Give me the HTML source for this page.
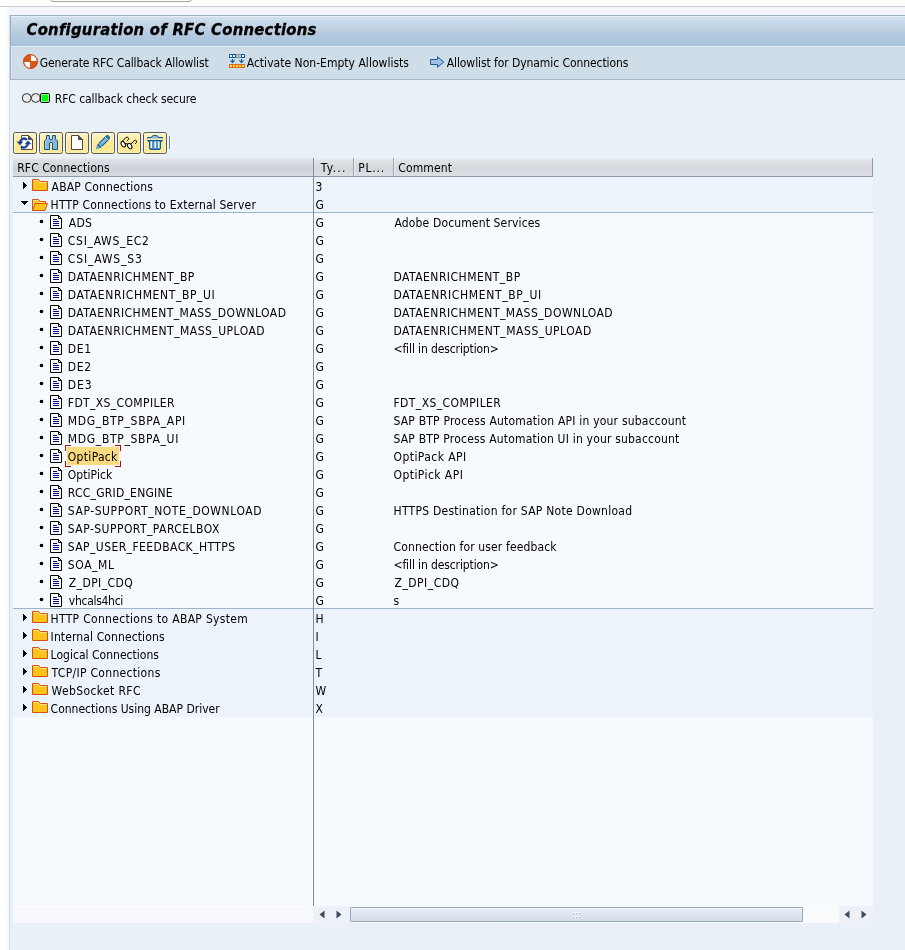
<!DOCTYPE html>
<html><head><meta charset="utf-8"><title>Configuration of RFC Connections</title>
<style>
*,*:before,*:after{box-sizing:border-box}
html,body{margin:0;padding:0}
body{width:905px;height:950px;overflow:hidden;position:relative;background:#fff;font-family:"DejaVu Sans Condensed","Liberation Sans",sans-serif;font-size:12px;color:#000}
.abs,.row,.row>*{position:absolute}
#topbox{position:absolute;left:50px;top:-10px;width:142px;height:12px;border:1px solid #a4a4a4;border-radius:3px;background:#fff}
#l6{position:absolute;left:0;top:6px;width:905px;height:1px;background:#c6cedb}
#band{position:absolute;left:0;top:7px;width:905px;height:943px;background:linear-gradient(90deg,#fff 0,#fff 5px,#f7f9fd 9px,#f2f5fb 10px)}
#panel{position:absolute;left:9px;top:15px;width:896px;height:935px;background:#e9f0f8;border-left:1px solid #d3d9e7}
#title{position:absolute;left:0;top:0;width:896px;height:31px;border-top:1px solid #9eb0c8;border-left:1px solid #9eb0c8;background:linear-gradient(#e8eef8 0,#e8eef8 1px,#d1dfed 1px,#c2d3e4 11px,#b4c9df 19px,#a9c4de 28px,#a8c0d8 29px)}
#title span{position:absolute;left:15.5px;top:4px;-webkit-text-stroke:0.3px #000;font-family:"DejaVu Sans Condensed","DejaVu Sans","Liberation Sans",sans-serif;font-weight:bold;font-style:italic;font-size:16.5px;line-height:20px;white-space:nowrap;letter-spacing:0.25px}
#tb{position:absolute;left:0;top:31px;width:896px;height:34px;border-top:1px solid #e1eefa;border-left:1px solid #9eb0c8;border-bottom:1px solid #a3b4c8;background:linear-gradient(#ccd9e3 0,#cfdde9 4px);box-shadow:inset 1px 0 0 #dde7f0,0 1px 0 #eef3f9}
.tbt{position:absolute;top:48px;height:32px;line-height:31px;white-space:nowrap}
.row{left:13px;width:860px;height:18px;line-height:18px;white-space:nowrap}
.row.f{background:#edf3fb}
.row.c{background:#f6f9fd}
.row .t{top:1px}
.row .ft{left:39px}
.row .ct{left:56px}
.row .ty{left:302.5px;top:1px}
.row .cm{top:1px}
.row .ic{display:block}
.row .fold{left:19px;top:2px}
.row .doc{left:37px;top:2px}
.ar{left:10px;top:5px;width:4px;height:7px}
.ad{left:8px;top:6px;width:7px;height:4px}
.bu{left:27px;top:7px;width:3px;height:3px;background:#000;border-radius:1.5px;box-shadow:0 0 0 0.3px #000}
.selbg{left:54px;top:0;width:52px;height:18px;background:#fbd97f}
.k{width:6px;height:6px;border:0 solid #b90a0a}
.k1{left:52px;top:-2px;border-width:1px 0 0 1px}.k2{left:102px;top:-2px;border-width:1px 1px 0 0}
.k3{left:52px;top:14px;border-width:0 0 1px 1px}.k4{left:102px;top:14px;border-width:0 1px 1px 0}
#hdr{position:absolute;left:13px;top:158px;width:860px;height:19px;background:linear-gradient(#e9ebee 0,#dde0e5 2px,#ced2d9 10px,#d8dbe0 18px);border-bottom:1px solid #8e9aaa;border-right:1px solid #8e9aaa;line-height:18px;white-space:nowrap}
#hdr span{position:absolute;top:1px}
#hdr i{position:absolute;left:301px;top:0;width:558px;height:18px;background:linear-gradient(#eef0f3 0,#e1e4e8 2px,#d4d8de 10px,#dcdfe4 18px)}
#vline{z-index:3;position:absolute;left:313px;top:158px;width:1px;height:748px;background:#838e9b}
.hsep{position:absolute;top:158px;width:1px;height:18px;background:#98a2b0;box-shadow:1px 0 0 #eceef2}
#sepA,#sepB{position:absolute;left:13px;width:860px;height:1px;background:#9eb2c8}
#empty{position:absolute;left:13px;top:717px;width:860px;height:189px;background:#f6f9fd}
.btn{position:absolute;top:132px;width:24px;height:22px;background:#fbe98f}
.btn:before{content:"";position:absolute;left:0;top:0;width:24px;height:22px;border:1px solid #585a60;border-radius:2.5px;background:linear-gradient(#fefadf 0,#fdf3bc 2px,#fbe994 9px,#fae78f 16px,#fcedaa 20px);box-shadow:inset 1px 0 0 #fdf5cc,inset -1px 0 0 #fcf0b8}
.btn svg{position:absolute;left:0;top:0}
#root{position:absolute;left:0;top:0;width:905px;height:950px;overflow:hidden;will-change:transform}
</style></head><body><div id="root">
<div id="topbox"></div><div id="l6"></div><div id="band"></div>
<div id="panel">
 <div id="title"><span>Configuration of RFC Connections</span></div>
 <div id="tb"></div>
</div>

<!-- app toolbar -->
<svg class="abs" style="left:23px;top:54px" width="15" height="15" viewBox="0 0 15 15"><circle cx="7.5" cy="7.5" r="7" fill="#dc5614" stroke="#c63e16" stroke-width="1"/><path d="M8 7V1.3A6.2 6.2 0 0 1 13.7 7Z M7 8V13.7A6.2 6.2 0 0 1 1.3 8Z" fill="#fff"/></svg>
<span class="tbt" style="left:39.8px;letter-spacing:-0.117px">Generate RFC Callback Allowlist</span>
<svg class="abs" style="left:229px;top:54px" width="16" height="14" viewBox="0 0 16 14"><rect x="0" y="0" width="16" height="4" rx="0.6" fill="#0b5f9c"/><rect x="7" y="0" width="5" height="4" fill="#8c8c8c"/><rect x="1" y="1" width="2" height="2" fill="#eef0fa"/><rect x="4" y="1" width="2" height="2" fill="#eef0fa"/><rect x="7.3" y="1" width="1.9" height="2" fill="#d6d2cc"/><rect x="10" y="1" width="1.9" height="2" fill="#d6d2cc"/><rect x="13" y="1" width="2" height="2" fill="#eef0fa"/><path d="M3.5 5V9M12.5 5V9" stroke="#0b5f9c" stroke-width="1.1"/><path d="M1.4 6.3L3.5 8.4L5.6 6.3M10.4 6.3L12.5 8.4L14.6 6.3" fill="none" stroke="#0b5f9c" stroke-width="1.1"/><rect x="0" y="10" width="16" height="4" rx="0.6" fill="#e4641c"/><rect x="1" y="11" width="2" height="2" fill="#ffe644"/><rect x="4" y="11" width="2" height="2" fill="#ffe644"/><rect x="7" y="11" width="2" height="2" fill="#ffe644"/><rect x="10" y="11" width="2" height="2" fill="#ffe644"/><rect x="13" y="11" width="2" height="2" fill="#ffe644"/></svg>
<span class="tbt" style="left:246.7px;letter-spacing:0.025px">Activate Non-Empty Allowlists</span>
<svg class="abs" style="left:430px;top:56px" width="15" height="12" viewBox="0 0 15 12"><path d="M0.5 3.5H7.5V0.8L13.8 6L7.5 11.2V8.5H0.5Z" fill="#9fc0e2" stroke="#1a5c98" stroke-width="1" stroke-linejoin="miter"/></svg>
<span class="tbt" style="left:446.7px;letter-spacing:-0.075px">Allowlist for Dynamic Connections</span>

<!-- status -->
<svg class="abs" style="left:22px;top:93px" width="29" height="10" viewBox="0 0 29 10"><circle cx="4.75" cy="5" r="4.2" fill="#ebebeb" stroke="#404040" stroke-width="1.2"/><circle cx="13.75" cy="5" r="4.2" fill="#ebebeb" stroke="#404040" stroke-width="1.2"/><circle cx="4.75" cy="5" r="3.3" fill="none" stroke="#fafafa" stroke-width="0.8"/><circle cx="13.75" cy="5" r="3.3" fill="none" stroke="#fafafa" stroke-width="0.8"/><rect x="18.5" y="0.5" width="9" height="9" rx="1.2" fill="#00ff00" stroke="#000"/><rect x="19.5" y="1.5" width="7" height="7" fill="none" stroke="#96f096"/></svg>
<span class="abs" style="left:54.7px;letter-spacing:-0.058px;top:90px;line-height:18px;white-space:nowrap">RFC callback check secure</span>

<!-- tree toolbar -->
<div class="btn" style="left:13px"><svg width="24" height="22" viewBox="0 0 24 22"><path d="M9 4H15.5L19 7.5V17H9Z" fill="#fff"/><path d="M8.5 6.2V3.5H15.5L19.5 7.5V17.5H8.5V15.6" fill="none" stroke="#484a50"/><path d="M15.5 3.5V7.5H19.5Z" fill="#55575c" stroke="#484a50" stroke-linejoin="round"/><path d="M14 7.8Q10 4.4 6.9 9.8" fill="none" stroke="#1b3f9c" stroke-width="2.3"/><path d="M3.6 9.6H10.4L7 13.2Z" fill="#1b3f9c"/><path d="M8 14.4Q12 17.8 15.1 12" fill="none" stroke="#1b3f9c" stroke-width="2.3"/><path d="M11.6 12.2H18.4L15 8.6Z" fill="#1b3f9c"/></svg></div>
<div class="btn" style="left:39px"><svg width="24" height="22" viewBox="0 0 24 22"><path d="M7.5 3.5H10.5V7Q12 8.2 13.5 7V3.5H16.5V7L18.5 9V17.5H13.5V11Q12 9.8 10.5 11V17.5H5.5V9L7.5 7Z" fill="#8fb3d9" stroke="#0b5a94" stroke-linejoin="round"/><path d="M8.5 4.5V7.5L6.5 9.5V16.5M14.5 4.5V7.5" fill="none" stroke="#b4cde6" stroke-width="1"/></svg></div>
<div class="btn" style="left:65px"><svg width="24" height="22" viewBox="0 0 24 22"><path d="M6.5 3.5H13.5L17.5 7.5V17.5H6.5Z" fill="#fff" stroke="#484a50"/><path d="M13.5 3.5V7.5H17.5Z" fill="#55575c" stroke="#484a50" stroke-linejoin="round"/></svg></div>
<div class="btn" style="left:91px"><svg width="24" height="22" viewBox="0 0 24 22"><g transform="translate(5.2,17) rotate(-45)"><path d="M0 0L4.6-2.6H15.8Q18.4-2.6 18.4 0Q18.4 2.6 15.8 2.6H4.6Z" fill="#1563a0"/><path d="M16-1.5Q17.4-1.5 17.4 0Q17.4 1.5 16 1.5Z" fill="#3f82bc"/><rect x="6.6" y="-1.4" width="7.6" height="2.8" fill="#8fb6de"/><path d="M5.7-2.6V2.6M14.8-2.6V2.6" stroke="#f4f4e8" stroke-width="0.9"/><path d="M1.2-0.6L3.6-1.8V1.8L1.2 0.6Z" fill="#6fa2d2"/></g></svg></div>
<div class="btn" style="left:117px"><svg width="24" height="22" viewBox="0 0 24 22"><g fill="#fff" stroke="#000" stroke-width="1"><ellipse cx="6.3" cy="12.2" rx="1.9" ry="3" transform="rotate(-32 6.3 12.2)"/><ellipse cx="12.7" cy="14.1" rx="1.9" ry="3" transform="rotate(-32 12.7 14.1)"/></g><g fill="none" stroke="#000" stroke-width="1" stroke-linecap="round"><path d="M8.2 11.6Q9.6 10.9 10.9 12.4"/><path d="M5 9.6L8.8 5.6Q10.6 4.4 11.6 6.2Q11.9 7.6 10.5 8.5"/><path d="M14.4 11.7L17.2 8.7Q18.9 7.6 19.7 9.2Q20 10.6 18.5 11.6"/></g></svg></div>
<div class="btn" style="left:143px"><svg width="24" height="22" viewBox="0 0 24 22"><path d="M4.5 6.5V5.5H8.5Q9 3.5 10.5 3.5H13.5Q15 3.5 15.5 5.5H19.5V6.5" fill="#8fb6de" stroke="#0b5a94" stroke-linejoin="round"/><path d="M4.5 8.5Q4.8 9.8 6.5 9.5V16Q6.5 17.5 8 17.5H16Q17.5 17.5 17.5 16V9.5Q19.2 9.8 19.5 8.5Z" fill="#4f8fc6" stroke="#0b5a94" stroke-linejoin="round"/><path d="M8.3 9.5V16M12.2 9.5V16M15.7 9.5V16" stroke="#fff" stroke-width="1.5"/></svg></div>
<div class="abs" style="left:169px;top:136px;width:1px;height:13px;background:#7c7c7c;box-shadow:1px 0 0 #fff"></div>

<!-- tree -->
<div id="hdr"><i></i><span style="left:4.3px;letter-spacing:0.064px">RFC Connections</span><span style="left:307.8px;letter-spacing:1.225px">Ty...</span><span style="left:345.3px;letter-spacing:0.775px">PL...</span><span style="left:385.3px;letter-spacing:0.117px">Comment</span></div>
<div id="empty"></div>
<div class="row f" style="top:177px"><svg class="ar" viewBox="0 0 4 7" shape-rendering="crispEdges"><path d="M0 0h1v7h-1zM1 1h1v5h-1zM2 2h1v3h-1zM3 3h1v1h-1z"/></svg><svg class="ic fold" width="16" height="12" viewBox="0 0 16 12"><path d="M0.5 0.5H6.5L8.5 2.5H15.5V11.5H0.5Z" fill="#fcc31a" stroke="#d5511c"/><path d="M1.5 1.5H6L8 3.5H14.5" fill="none" stroke="#fde48a" stroke-width="1"/></svg><span class="t" style="left:38.6px;letter-spacing:0.16px">ABAP Connections</span><span class="ty">3</span></div>
<div class="row f" style="top:195px"><svg class="ad" viewBox="0 0 7 4" shape-rendering="crispEdges"><path d="M0 0h7v1h-7zM1 1h5v1h-5zM2 2h3v1h-3zM3 3h1v1h-1z"/></svg><svg class="ic fold" style="top:4px" width="16" height="12" viewBox="0 0 16 12"><path d="M0.5 11.5V0.5H6.5L8.5 2.5H13.5V4.5" fill="#fcc31a" stroke="#d5511c"/><path d="M0.5 11.5L3 4.5H15.5L13 11.5Z" fill="#fcc31a" stroke="#d5511c"/><path d="M1.5 7V1.5H6L8 3.5H12.5" fill="none" stroke="#fde48a"/></svg><span class="t" style="left:37.6px;letter-spacing:0.182px">HTTP Connections to External Server</span><span class="ty">G</span></div>
<div class="row c" style="top:213px"><i class="bu"></i><svg class="ic doc" width="12" height="14" viewBox="0 0 12 14"><path d="M0.5 0.5H8.5L11.5 3.5V13.5H0.5Z" fill="#fff" stroke="#000"/><path d="M8.5 0.5V3.5H11.5" fill="none" stroke="#000"/><path d="M3 4.5H7M3 6.5H9M3 8.5H9M3 10.5H9" stroke="#00008c" stroke-width="1"/></svg><span class="t" style="left:55.8px;letter-spacing:0.25px">ADS</span><span class="ty">G</span><span class="cm" style="left:381.5px;letter-spacing:0.145px">Adobe Document Services</span></div>
<div class="row c" style="top:231px"><i class="bu"></i><svg class="ic doc" width="12" height="14" viewBox="0 0 12 14"><path d="M0.5 0.5H8.5L11.5 3.5V13.5H0.5Z" fill="#fff" stroke="#000"/><path d="M8.5 0.5V3.5H11.5" fill="none" stroke="#000"/><path d="M3 4.5H7M3 6.5H9M3 8.5H9M3 10.5H9" stroke="#00008c" stroke-width="1"/></svg><span class="t" style="left:54.8px;letter-spacing:0.72px">CSI_AWS_EC2</span><span class="ty">G</span></div>
<div class="row c" style="top:249px"><i class="bu"></i><svg class="ic doc" width="12" height="14" viewBox="0 0 12 14"><path d="M0.5 0.5H8.5L11.5 3.5V13.5H0.5Z" fill="#fff" stroke="#000"/><path d="M8.5 0.5V3.5H11.5" fill="none" stroke="#000"/><path d="M3 4.5H7M3 6.5H9M3 8.5H9M3 10.5H9" stroke="#00008c" stroke-width="1"/></svg><span class="t" style="left:54.8px;letter-spacing:0.844px">CSI_AWS_S3</span><span class="ty">G</span></div>
<div class="row c" style="top:267px"><i class="bu"></i><svg class="ic doc" width="12" height="14" viewBox="0 0 12 14"><path d="M0.5 0.5H8.5L11.5 3.5V13.5H0.5Z" fill="#fff" stroke="#000"/><path d="M8.5 0.5V3.5H11.5" fill="none" stroke="#000"/><path d="M3 4.5H7M3 6.5H9M3 8.5H9M3 10.5H9" stroke="#00008c" stroke-width="1"/></svg><span class="t" style="left:54.8px;letter-spacing:0.475px">DATAENRICHMENT_BP</span><span class="ty">G</span><span class="cm" style="left:380.5px;letter-spacing:0.481px">DATAENRICHMENT_BP</span></div>
<div class="row c" style="top:285px"><i class="bu"></i><svg class="ic doc" width="12" height="14" viewBox="0 0 12 14"><path d="M0.5 0.5H8.5L11.5 3.5V13.5H0.5Z" fill="#fff" stroke="#000"/><path d="M8.5 0.5V3.5H11.5" fill="none" stroke="#000"/><path d="M3 4.5H7M3 6.5H9M3 8.5H9M3 10.5H9" stroke="#00008c" stroke-width="1"/></svg><span class="t" style="left:54.8px;letter-spacing:0.605px">DATAENRICHMENT_BP_UI</span><span class="ty">G</span><span class="cm" style="left:380.5px;letter-spacing:0.642px">DATAENRICHMENT_BP_UI</span></div>
<div class="row c" style="top:303px"><i class="bu"></i><svg class="ic doc" width="12" height="14" viewBox="0 0 12 14"><path d="M0.5 0.5H8.5L11.5 3.5V13.5H0.5Z" fill="#fff" stroke="#000"/><path d="M8.5 0.5V3.5H11.5" fill="none" stroke="#000"/><path d="M3 4.5H7M3 6.5H9M3 8.5H9M3 10.5H9" stroke="#00008c" stroke-width="1"/></svg><span class="t" style="left:54.8px;letter-spacing:0.452px">DATAENRICHMENT_MASS_DOWNLOAD</span><span class="ty">G</span><span class="cm" style="left:380.5px;letter-spacing:0.489px">DATAENRICHMENT_MASS_DOWNLOAD</span></div>
<div class="row c" style="top:321px"><i class="bu"></i><svg class="ic doc" width="12" height="14" viewBox="0 0 12 14"><path d="M0.5 0.5H8.5L11.5 3.5V13.5H0.5Z" fill="#fff" stroke="#000"/><path d="M8.5 0.5V3.5H11.5" fill="none" stroke="#000"/><path d="M3 4.5H7M3 6.5H9M3 8.5H9M3 10.5H9" stroke="#00008c" stroke-width="1"/></svg><span class="t" style="left:54.8px;letter-spacing:0.48px">DATAENRICHMENT_MASS_UPLOAD</span><span class="ty">G</span><span class="cm" style="left:380.5px;letter-spacing:0.516px">DATAENRICHMENT_MASS_UPLOAD</span></div>
<div class="row c" style="top:339px"><i class="bu"></i><svg class="ic doc" width="12" height="14" viewBox="0 0 12 14"><path d="M0.5 0.5H8.5L11.5 3.5V13.5H0.5Z" fill="#fff" stroke="#000"/><path d="M8.5 0.5V3.5H11.5" fill="none" stroke="#000"/><path d="M3 4.5H7M3 6.5H9M3 8.5H9M3 10.5H9" stroke="#00008c" stroke-width="1"/></svg><span class="t" style="left:54.8px;letter-spacing:0.6px">DE1</span><span class="ty">G</span><span class="cm" style="left:380.5px;letter-spacing:-0.115px">&lt;fill in description&gt;</span></div>
<div class="row c" style="top:357px"><i class="bu"></i><svg class="ic doc" width="12" height="14" viewBox="0 0 12 14"><path d="M0.5 0.5H8.5L11.5 3.5V13.5H0.5Z" fill="#fff" stroke="#000"/><path d="M8.5 0.5V3.5H11.5" fill="none" stroke="#000"/><path d="M3 4.5H7M3 6.5H9M3 8.5H9M3 10.5H9" stroke="#00008c" stroke-width="1"/></svg><span class="t" style="left:54.8px;letter-spacing:0.6px">DE2</span><span class="ty">G</span></div>
<div class="row c" style="top:375px"><i class="bu"></i><svg class="ic doc" width="12" height="14" viewBox="0 0 12 14"><path d="M0.5 0.5H8.5L11.5 3.5V13.5H0.5Z" fill="#fff" stroke="#000"/><path d="M8.5 0.5V3.5H11.5" fill="none" stroke="#000"/><path d="M3 4.5H7M3 6.5H9M3 8.5H9M3 10.5H9" stroke="#00008c" stroke-width="1"/></svg><span class="t" style="left:54.8px;letter-spacing:0.85px">DE3</span><span class="ty">G</span></div>
<div class="row c" style="top:393px"><i class="bu"></i><svg class="ic doc" width="12" height="14" viewBox="0 0 12 14"><path d="M0.5 0.5H8.5L11.5 3.5V13.5H0.5Z" fill="#fff" stroke="#000"/><path d="M8.5 0.5V3.5H11.5" fill="none" stroke="#000"/><path d="M3 4.5H7M3 6.5H9M3 8.5H9M3 10.5H9" stroke="#00008c" stroke-width="1"/></svg><span class="t" style="left:54.8px;letter-spacing:0.371px">FDT_XS_COMPILER</span><span class="ty">G</span><span class="cm" style="left:380.5px;letter-spacing:0.414px">FDT_XS_COMPILER</span></div>
<div class="row c" style="top:411px"><i class="bu"></i><svg class="ic doc" width="12" height="14" viewBox="0 0 12 14"><path d="M0.5 0.5H8.5L11.5 3.5V13.5H0.5Z" fill="#fff" stroke="#000"/><path d="M8.5 0.5V3.5H11.5" fill="none" stroke="#000"/><path d="M3 4.5H7M3 6.5H9M3 8.5H9M3 10.5H9" stroke="#00008c" stroke-width="1"/></svg><span class="t" style="left:54.8px;letter-spacing:0.687px">MDG_BTP_SBPA_API</span><span class="ty">G</span><span class="cm" style="left:380.5px;letter-spacing:0.204px">SAP BTP Process Automation API in your subaccount</span></div>
<div class="row c" style="top:429px"><i class="bu"></i><svg class="ic doc" width="12" height="14" viewBox="0 0 12 14"><path d="M0.5 0.5H8.5L11.5 3.5V13.5H0.5Z" fill="#fff" stroke="#000"/><path d="M8.5 0.5V3.5H11.5" fill="none" stroke="#000"/><path d="M3 4.5H7M3 6.5H9M3 8.5H9M3 10.5H9" stroke="#00008c" stroke-width="1"/></svg><span class="t" style="left:54.8px;letter-spacing:0.671px">MDG_BTP_SBPA_UI</span><span class="ty">G</span><span class="cm" style="left:380.5px;letter-spacing:0.191px">SAP BTP Process Automation UI in your subaccount</span></div>
<div class="row c" style="top:447px;z-index:2"><b class="selbg"></b><b class="k k1"></b><b class="k k2"></b><b class="k k3"></b><b class="k k4"></b><i class="bu"></i><svg class="ic doc" width="12" height="14" viewBox="0 0 12 14"><path d="M0.5 0.5H8.5L11.5 3.5V13.5H0.5Z" fill="#fff" stroke="#000"/><path d="M8.5 0.5V3.5H11.5" fill="none" stroke="#000"/><path d="M3 4.5H7M3 6.5H9M3 8.5H9M3 10.5H9" stroke="#00008c" stroke-width="1"/></svg><span class="t" style="left:54.8px;letter-spacing:0.314px">OptiPack</span><span class="ty">G</span><span class="cm" style="left:380.5px;letter-spacing:0.445px">OptiPack API</span></div>
<div class="row c" style="top:465px"><i class="bu"></i><svg class="ic doc" width="12" height="14" viewBox="0 0 12 14"><path d="M0.5 0.5H8.5L11.5 3.5V13.5H0.5Z" fill="#fff" stroke="#000"/><path d="M8.5 0.5V3.5H11.5" fill="none" stroke="#000"/><path d="M3 4.5H7M3 6.5H9M3 8.5H9M3 10.5H9" stroke="#00008c" stroke-width="1"/></svg><span class="t" style="left:54.8px;letter-spacing:0.057px">OptiPick</span><span class="ty">G</span><span class="cm" style="left:380.5px;letter-spacing:0.436px">OptiPick API</span></div>
<div class="row c" style="top:483px"><i class="bu"></i><svg class="ic doc" width="12" height="14" viewBox="0 0 12 14"><path d="M0.5 0.5H8.5L11.5 3.5V13.5H0.5Z" fill="#fff" stroke="#000"/><path d="M8.5 0.5V3.5H11.5" fill="none" stroke="#000"/><path d="M3 4.5H7M3 6.5H9M3 8.5H9M3 10.5H9" stroke="#00008c" stroke-width="1"/></svg><span class="t" style="left:54.8px;letter-spacing:0.243px">RCC_GRID_ENGINE</span><span class="ty">G</span></div>
<div class="row c" style="top:501px"><i class="bu"></i><svg class="ic doc" width="12" height="14" viewBox="0 0 12 14"><path d="M0.5 0.5H8.5L11.5 3.5V13.5H0.5Z" fill="#fff" stroke="#000"/><path d="M8.5 0.5V3.5H11.5" fill="none" stroke="#000"/><path d="M3 4.5H7M3 6.5H9M3 8.5H9M3 10.5H9" stroke="#00008c" stroke-width="1"/></svg><span class="t" style="left:54.8px;letter-spacing:0.571px">SAP-SUPPORT_NOTE_DOWNLOAD</span><span class="ty">G</span><span class="cm" style="left:380.5px;letter-spacing:0.263px">HTTPS Destination for SAP Note Download</span></div>
<div class="row c" style="top:519px"><i class="bu"></i><svg class="ic doc" width="12" height="14" viewBox="0 0 12 14"><path d="M0.5 0.5H8.5L11.5 3.5V13.5H0.5Z" fill="#fff" stroke="#000"/><path d="M8.5 0.5V3.5H11.5" fill="none" stroke="#000"/><path d="M3 4.5H7M3 6.5H9M3 8.5H9M3 10.5H9" stroke="#00008c" stroke-width="1"/></svg><span class="t" style="left:54.8px;letter-spacing:0.465px">SAP-SUPPORT_PARCELBOX</span><span class="ty">G</span></div>
<div class="row c" style="top:537px"><i class="bu"></i><svg class="ic doc" width="12" height="14" viewBox="0 0 12 14"><path d="M0.5 0.5H8.5L11.5 3.5V13.5H0.5Z" fill="#fff" stroke="#000"/><path d="M8.5 0.5V3.5H11.5" fill="none" stroke="#000"/><path d="M3 4.5H7M3 6.5H9M3 8.5H9M3 10.5H9" stroke="#00008c" stroke-width="1"/></svg><span class="t" style="left:54.8px;letter-spacing:0.418px">SAP_USER_FEEDBACK_HTTPS</span><span class="ty">G</span><span class="cm" style="left:380.5px;letter-spacing:0.137px">Connection for user feedback</span></div>
<div class="row c" style="top:555px"><i class="bu"></i><svg class="ic doc" width="12" height="14" viewBox="0 0 12 14"><path d="M0.5 0.5H8.5L11.5 3.5V13.5H0.5Z" fill="#fff" stroke="#000"/><path d="M8.5 0.5V3.5H11.5" fill="none" stroke="#000"/><path d="M3 4.5H7M3 6.5H9M3 8.5H9M3 10.5H9" stroke="#00008c" stroke-width="1"/></svg><span class="t" style="left:54.8px;letter-spacing:0.6px">SOA_ML</span><span class="ty">G</span><span class="cm" style="left:380.5px;letter-spacing:-0.115px">&lt;fill in description&gt;</span></div>
<div class="row c" style="top:573px"><i class="bu"></i><svg class="ic doc" width="12" height="14" viewBox="0 0 12 14"><path d="M0.5 0.5H8.5L11.5 3.5V13.5H0.5Z" fill="#fff" stroke="#000"/><path d="M8.5 0.5V3.5H11.5" fill="none" stroke="#000"/><path d="M3 4.5H7M3 6.5H9M3 8.5H9M3 10.5H9" stroke="#00008c" stroke-width="1"/></svg><span class="t" style="left:55.8px;letter-spacing:0.412px">Z_DPI_CDQ</span><span class="ty">G</span><span class="cm" style="left:381.5px;letter-spacing:0.5px">Z_DPI_CDQ</span></div>
<div class="row c" style="top:591px"><i class="bu"></i><svg class="ic doc" width="12" height="14" viewBox="0 0 12 14"><path d="M0.5 0.5H8.5L11.5 3.5V13.5H0.5Z" fill="#fff" stroke="#000"/><path d="M8.5 0.5V3.5H11.5" fill="none" stroke="#000"/><path d="M3 4.5H7M3 6.5H9M3 8.5H9M3 10.5H9" stroke="#00008c" stroke-width="1"/></svg><span class="t" style="left:55.8px;letter-spacing:-0.278px">vhcals4hci</span><span class="ty">G</span><span class="cm" style="left:380.5px">s</span></div>
<div class="row f" style="top:609px"><svg class="ar" viewBox="0 0 4 7" shape-rendering="crispEdges"><path d="M0 0h1v7h-1zM1 1h1v5h-1zM2 2h1v3h-1zM3 3h1v1h-1z"/></svg><svg class="ic fold" width="16" height="12" viewBox="0 0 16 12"><path d="M0.5 0.5H6.5L8.5 2.5H15.5V11.5H0.5Z" fill="#fcc31a" stroke="#d5511c"/><path d="M1.5 1.5H6L8 3.5H14.5" fill="none" stroke="#fde48a" stroke-width="1"/></svg><span class="t" style="left:37.6px;letter-spacing:0.31px">HTTP Connections to ABAP System</span><span class="ty">H</span></div>
<div class="row f" style="top:627px"><svg class="ar" viewBox="0 0 4 7" shape-rendering="crispEdges"><path d="M0 0h1v7h-1zM1 1h1v5h-1zM2 2h1v3h-1zM3 3h1v1h-1z"/></svg><svg class="ic fold" width="16" height="12" viewBox="0 0 16 12"><path d="M0.5 0.5H6.5L8.5 2.5H15.5V11.5H0.5Z" fill="#fcc31a" stroke="#d5511c"/><path d="M1.5 1.5H6L8 3.5H14.5" fill="none" stroke="#fde48a" stroke-width="1"/></svg><span class="t" style="left:37.6px;letter-spacing:0.116px">Internal Connections</span><span class="ty">I</span></div>
<div class="row f" style="top:645px"><svg class="ar" viewBox="0 0 4 7" shape-rendering="crispEdges"><path d="M0 0h1v7h-1zM1 1h1v5h-1zM2 2h1v3h-1zM3 3h1v1h-1z"/></svg><svg class="ic fold" width="16" height="12" viewBox="0 0 16 12"><path d="M0.5 0.5H6.5L8.5 2.5H15.5V11.5H0.5Z" fill="#fcc31a" stroke="#d5511c"/><path d="M1.5 1.5H6L8 3.5H14.5" fill="none" stroke="#fde48a" stroke-width="1"/></svg><span class="t" style="left:37.6px;letter-spacing:0.022px">Logical Connections</span><span class="ty">L</span></div>
<div class="row f" style="top:663px"><svg class="ar" viewBox="0 0 4 7" shape-rendering="crispEdges"><path d="M0 0h1v7h-1zM1 1h1v5h-1zM2 2h1v3h-1zM3 3h1v1h-1z"/></svg><svg class="ic fold" width="16" height="12" viewBox="0 0 16 12"><path d="M0.5 0.5H6.5L8.5 2.5H15.5V11.5H0.5Z" fill="#fcc31a" stroke="#d5511c"/><path d="M1.5 1.5H6L8 3.5H14.5" fill="none" stroke="#fde48a" stroke-width="1"/></svg><span class="t" style="left:38.6px;letter-spacing:0.312px">TCP/IP Connections</span><span class="ty">T</span></div>
<div class="row f" style="top:681px"><svg class="ar" viewBox="0 0 4 7" shape-rendering="crispEdges"><path d="M0 0h1v7h-1zM1 1h1v5h-1zM2 2h1v3h-1zM3 3h1v1h-1z"/></svg><svg class="ic fold" width="16" height="12" viewBox="0 0 16 12"><path d="M0.5 0.5H6.5L8.5 2.5H15.5V11.5H0.5Z" fill="#fcc31a" stroke="#d5511c"/><path d="M1.5 1.5H6L8 3.5H14.5" fill="none" stroke="#fde48a" stroke-width="1"/></svg><span class="t" style="left:38.6px;letter-spacing:0.383px">WebSocket RFC</span><span class="ty">W</span></div>
<div class="row f" style="top:699px"><svg class="ar" viewBox="0 0 4 7" shape-rendering="crispEdges"><path d="M0 0h1v7h-1zM1 1h1v5h-1zM2 2h1v3h-1zM3 3h1v1h-1z"/></svg><svg class="ic fold" width="16" height="12" viewBox="0 0 16 12"><path d="M0.5 0.5H6.5L8.5 2.5H15.5V11.5H0.5Z" fill="#fcc31a" stroke="#d5511c"/><path d="M1.5 1.5H6L8 3.5H14.5" fill="none" stroke="#fde48a" stroke-width="1"/></svg><span class="t" style="left:37.6px;letter-spacing:-0.004px">Connections Using ABAP Driver</span><span class="ty">X</span></div>
<div id="sepA" style="top:212px"></div><div id="sepB" style="top:608px"></div>
<div id="vline"></div>
<div class="hsep" style="left:353px"></div><div class="hsep" style="left:393px"></div>

<!-- scrollbar -->
<div class="abs" style="left:13px;top:906px;width:300px;height:17px;background:#f7f9fd;border-top:1px solid #fff"></div>
<div class="abs" style="left:313px;top:906px;width:560px;height:17px;background:#eef2f8"></div>
<div class="abs" style="left:350px;top:906px;width:489px;height:17px;background:#fafbfc"></div>
<div class="abs" style="left:350px;top:907px;width:453px;height:15px;border:1px solid #9aaabc;border-radius:1px;background:linear-gradient(#e8eef6,#d2deea);box-shadow:inset 0 1px 0 #f4f8fc"></div>
<svg class="abs" style="left:572px;top:912px" width="9" height="6" viewBox="0 0 9 6"><g fill="#fff"><rect x="0" y="0" width="2" height="2"/><rect x="3" y="0" width="2" height="2"/><rect x="6" y="0" width="2" height="2"/><rect x="0" y="4" width="2" height="2"/><rect x="3" y="4" width="2" height="2"/><rect x="6" y="4" width="2" height="2"/></g><g fill="#9aa8b8"><rect x="1" y="1" width="1" height="1"/><rect x="4" y="1" width="1" height="1"/><rect x="7" y="1" width="1" height="1"/><rect x="1" y="5" width="1" height="1"/><rect x="4" y="5" width="1" height="1"/><rect x="7" y="5" width="1" height="1"/></g></svg>
<svg class="abs" style="left:319px;top:910px" width="6" height="9" viewBox="0 0 6 9"><path d="M5.5 0.5V8.5L0.5 4.5Z" fill="#3c4c5c"/></svg>
<svg class="abs" style="left:336px;top:910px" width="6" height="9" viewBox="0 0 6 9"><path d="M0.5 0.5V8.5L5.5 4.5Z" fill="#3c4c5c"/></svg>
<svg class="abs" style="left:844px;top:910px" width="6" height="9" viewBox="0 0 6 9"><path d="M5.5 0.5V8.5L0.5 4.5Z" fill="#3c4c5c"/></svg>
<svg class="abs" style="left:861px;top:910px" width="6" height="9" viewBox="0 0 6 9"><path d="M0.5 0.5V8.5L5.5 4.5Z" fill="#3c4c5c"/></svg>
</div></body></html>
